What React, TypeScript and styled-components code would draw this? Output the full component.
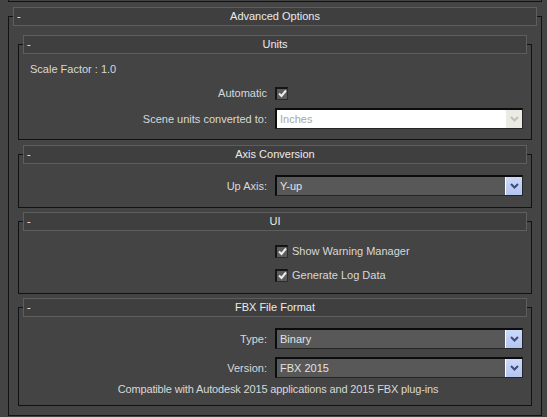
import styled, { createGlobalStyle } from "styled-components"

const GlobalStyle = createGlobalStyle`
  body {
    margin: 0;
    background: #444444;
    font-family: "Liberation Sans", Arial, sans-serif;
    font-size: 11px;
    color: #d8d8d8;
  }
`

const Page = styled.div`
  width: 547px;
  height: 417px;
  overflow: hidden;
  box-sizing: border-box;
  padding: 0 5px 0 8px;
  background: #444444;
`

const PrevEdge = styled.div`
  height: 1px;
  border: 1px solid #121212;
  border-top: none;
`

const Frame = styled.div<{ $top: number }>`
  display: flex;
  flex-direction: column;
  margin-top: ${p => p.$top}px;
  border: 1px solid #121212;
`

const Header = styled.div`
  display: grid;
  grid-template-columns: 20px 1fr 20px;
  height: 17px;
  line-height: 17px;
  margin: -10px 4px 0;
  border: 1px solid #5e5e5e;
  background: #3f3f3f;
  color: #ebebeb;
`

const Dash = styled.span`
  padding-left: 3px;
`

const Title = styled.span`
  text-align: center;
`

const Content = styled.div`
  display: flex;
  flex-direction: column;
  padding: 0 9px 9px;
`

const Body = styled.div<{ $pt: number; $pb: number; $gap?: number }>`
  display: flex;
  flex-direction: column;
  gap: ${p => p.$gap ?? 8}px;
  padding: ${p => p.$pt}px 8px ${p => p.$pb}px 11px;
`

const Text = styled.div`
  height: 14px;
  line-height: 14px;
`

const FormRow = styled.div<{ $h?: number }>`
  display: grid;
  grid-template-columns: 1fr 248px;
  column-gap: 8px;
  align-items: center;
  height: ${p => p.$h ?? 21}px;
`

const Label = styled.span`
  text-align: right;
  white-space: nowrap;
`

const CheckRow = styled.label`
  display: flex;
  align-items: center;
  gap: 4px;
`

const Box = styled.span`
  display: flex;
  align-items: center;
  justify-content: center;
  width: 13px;
  height: 13px;
  box-sizing: border-box;
  border-style: solid;
  border-width: 2px 1px 1px 2px;
  border-color: #151515 #2c2c2c #2c2c2c #151515;
  background: #5c5c5c;
`

const Select = styled.div<{ $disabled?: boolean }>`
  display: flex;
  height: 21px;
  box-sizing: border-box;
  border-style: solid;
  border-width: 2px 1px 1px 2px;
  border-color: #0c0c0c #262626 #262626 #0c0c0c;
  background: ${p => (p.$disabled ? "#ffffff" : "#585858")};
`

const Value = styled.span<{ $disabled?: boolean }>`
  flex: 1;
  padding-left: 3px;
  line-height: 18px;
  color: ${p => (p.$disabled ? "#a8a89f" : "#e2e2e2")};
`

const Arrow = styled.span<{ $disabled?: boolean }>`
  display: flex;
  align-items: center;
  justify-content: center;
  width: 16px;
  border-left: 1px solid #ffffff;
  background: ${p => (p.$disabled ? "#ebebe4" : "linear-gradient(#ccd9fa, #b4c5f2)")};
  color: ${p => (p.$disabled ? "#c2c2ba" : "#3d4d7a")};
`

const Note = styled.div`
  height: 14px;
  line-height: 14px;
  text-align: center;
  margin-right: -3px;
  letter-spacing: -0.15px;
`

const Chevron = () => (
  <svg width="9" height="6" viewBox="0 0 9 6">
    <path d="M1 1 L4.5 4.5 L8 1" fill="none" stroke="currentColor" strokeWidth="2" />
  </svg>
)

const Check = () => (
  <svg width="9" height="9" viewBox="0 0 9 9">
    <path d="M1 4.5 L3.5 7 L8 1.5" fill="none" stroke="#ececec" strokeWidth="2" />
  </svg>
)

const Dropdown = ({ value, disabled }: { value: string; disabled?: boolean }) => (
  <Select $disabled={disabled}>
    <Value $disabled={disabled}>{value}</Value>
    <Arrow $disabled={disabled}>
      <Chevron />
    </Arrow>
  </Select>
)

const Checkbox = ({ label }: { label?: string }) => (
  <CheckRow>
    <Box>
      <Check />
    </Box>
    {label && <span>{label}</span>}
  </CheckRow>
)

const Rollout = ({ title, top, children }: { title: string; top: number; children: React.ReactNode }) => (
  <Frame $top={top}>
    <Header>
      <Dash>-</Dash>
      <Title>{title}</Title>
    </Header>
    {children}
  </Frame>
)

const App = () => {
  return (
    <>
      <GlobalStyle />
      <Page>
        <PrevEdge />
        <Rollout title="Advanced Options" top={14}>
          <Content>
            <Rollout title="Units" top={18}>
              <Body $pt={8} $pb={10}>
                <Text>Scale Factor : 1.0</Text>
                <FormRow $h={14} style={{ marginTop: 2 }}>
                  <Label>Automatic</Label>
                  <Checkbox />
                </FormRow>
                <FormRow>
                  <Label>Scene units converted to:</Label>
                  <Dropdown value="Inches" disabled />
                </FormRow>
              </Body>
            </Rollout>

            <Rollout title="Axis Conversion" top={14}>
              <Body $pt={11} $pb={11}>
                <FormRow>
                  <Label>Up Axis:</Label>
                  <Dropdown value="Y-up" />
                </FormRow>
              </Body>
            </Rollout>

            <Rollout title="UI" top={13}>
              <Body $pt={13} $pb={11} $gap={10}>
                <FormRow $h={14}>
                  <span />
                  <Checkbox label="Show Warning Manager" />
                </FormRow>
                <FormRow $h={14}>
                  <span />
                  <Checkbox label="Generate Log Data" />
                </FormRow>
              </Body>
            </Rollout>

            <Rollout title="FBX File Format" top={13}>
              <Body $pt={11} $pb={9}>
                <FormRow>
                  <Label>Type:</Label>
                  <Dropdown value="Binary" />
                </FormRow>
                <FormRow>
                  <Label>Version:</Label>
                  <Dropdown value="FBX 2015" />
                </FormRow>
                <Note style={{ marginTop: -4 }}>
                  Compatible with Autodesk 2015 applications and 2015 FBX plug-ins
                </Note>
              </Body>
            </Rollout>
          </Content>
        </Rollout>
      </Page>
    </>
  )
}

export default App
